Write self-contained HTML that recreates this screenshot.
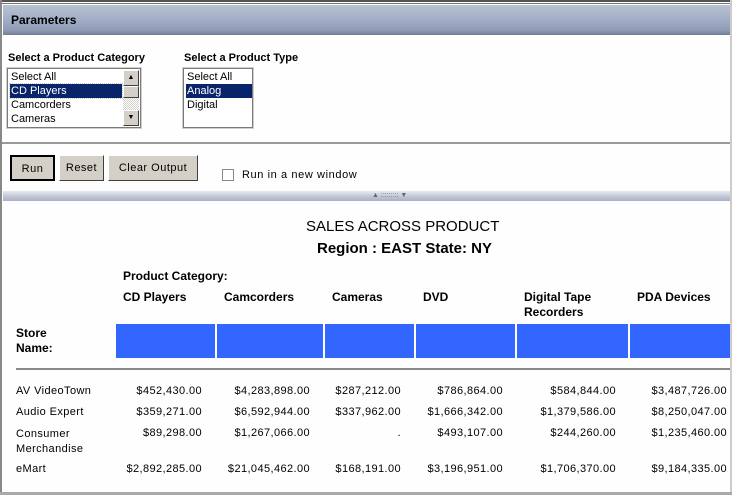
<!DOCTYPE html>
<html><head><meta charset="utf-8"><style>
*{margin:0;padding:0;box-sizing:border-box}
body{width:732px;height:495px;background:#fdfefd;position:relative;overflow:hidden;font-family:"Liberation Sans",sans-serif;font-size:12px;color:#000}
.a{position:absolute;white-space:nowrap}
.b{font-weight:bold}
.hdr{left:3px;top:5px;width:727px;height:30px;background:linear-gradient(#b9c2d3,#a6b2c9 40%,#8f9bb5 85%,#6f7a93)}
.lb{background:#fff;border:1px solid #7a7a7a;box-shadow:0 0 0 1px #d0d0d0;overflow:hidden}
.it{position:absolute;left:2px;height:14px;line-height:14px;font-size:11px;padding-left:1px}
.sel{background:#0a246a;color:#fff}
.btn{position:absolute;top:155px;height:26px;background:#d4d0c8;border:1px solid;border-color:#fff #404040 #404040 #fff;font-size:11px;text-align:center;line-height:24px;letter-spacing:.5px}
.blue{position:absolute;top:324px;height:34px;background:#3366ff}
.r{position:absolute;text-align:right;font-size:11px;letter-spacing:.4px}
.l{position:absolute;font-size:11px;letter-spacing:.4px}
</style></head><body>
<div class="a" style="left:0;top:0;width:732px;height:2px;background:#555"></div>
<div class="a" style="left:0;top:3px;width:732px;height:1px;background:#777"></div>
<div class="a" style="left:0;top:0;width:2px;height:495px;background:#888"></div>
<div class="a" style="left:730px;top:0;width:2px;height:495px;background:#ccc"></div>
<div class="a hdr"></div>
<div class="a b" style="left:11px;top:13px;font-size:12px">Parameters</div>

<div class="a b" style="left:8px;top:52px;font-size:11px">Select a Product Category</div>
<div class="a b" style="left:184px;top:52px;font-size:11px">Select a Product Type</div>

<div class="a lb" style="left:7px;top:68px;width:134px;height:60px">
 <div class="it" style="top:1px;width:112px">Select All</div>
 <div class="it sel" style="top:15px;width:112px;outline:1px dotted #ccc">CD Players</div>
 <div class="it" style="top:29px;width:112px">Camcorders</div>
 <div class="it" style="top:43px;width:112px">Cameras</div>
 <div style="position:absolute;left:115px;top:1px;width:16px;height:56px;background:repeating-conic-gradient(#d4d0c8 0 25%,#fff 0 50%) 0 0/2px 2px"></div>
 <div style="position:absolute;left:115px;top:1px;width:16px;height:16px;background:#d4d0c8;border:1px solid;border-color:#fff #404040 #404040 #fff;font-size:7px;text-align:center;line-height:14px">▲</div>
 <div style="position:absolute;left:115px;top:17px;width:16px;height:12px;background:#d4d0c8;border:1px solid;border-color:#fff #404040 #404040 #fff"></div>
 <div style="position:absolute;left:115px;top:41px;width:16px;height:16px;background:#d4d0c8;border:1px solid;border-color:#fff #404040 #404040 #fff;font-size:7px;text-align:center;line-height:14px">▼</div>
</div>
<div class="a lb" style="left:183px;top:68px;width:70px;height:60px">
 <div class="it" style="top:1px;width:66px">Select All</div>
 <div class="it sel" style="top:15px;width:66px">Analog</div>
 <div class="it" style="top:29px;width:66px">Digital</div>
</div>

<div class="a" style="left:2px;top:142px;width:728px;height:2px;background:#999"></div>

<div class="btn" style="left:10px;width:45px;border:2px solid #000;">Run</div>
<div class="btn" style="left:59px;width:45px">Reset</div>
<div class="btn" style="left:108px;width:90px">Clear Output</div>
<div class="a" style="left:222px;top:169px;width:12px;height:12px;border:1px solid #888;background:#fff"></div>
<div class="a" style="left:242px;top:169px;font-size:11px;letter-spacing:.6px">Run in a new window</div>

<div class="a" style="left:3px;top:191px;width:727px;height:10px;background:linear-gradient(#e6e9f0,#c4cad8 50%,#a9b1c6)"></div>
<div class="a" style="left:372px;top:191px;font-size:7px;color:#667;line-height:9px">▲ ::::::::: ▼</div>

<div class="a" style="left:306px;top:218px;font-size:15px">SALES ACROSS PRODUCT</div>
<div class="a b" style="left:317px;top:240px;font-size:15px">Region : EAST State: NY</div>

<div class="a b" style="left:123px;top:269px">Product Category:</div>
<div class="a b" style="left:123px;top:290px">CD Players</div>
<div class="a b" style="left:224px;top:290px">Camcorders</div>
<div class="a b" style="left:332px;top:290px">Cameras</div>
<div class="a b" style="left:423px;top:290px">DVD</div>
<div class="a b" style="left:524px;top:290px;line-height:15px">Digital Tape<br>Recorders</div>
<div class="a b" style="left:637px;top:290px">PDA Devices</div>
<div class="a b" style="left:16px;top:326px;line-height:15px">Store<br>Name:</div>

<div class="blue" style="left:116px;width:99px"></div>
<div class="blue" style="left:217px;width:106px"></div>
<div class="blue" style="left:325px;width:89px"></div>
<div class="blue" style="left:416px;width:99px"></div>
<div class="blue" style="left:517px;width:111px"></div>
<div class="blue" style="left:630px;width:100px"></div>
<div class="a" style="left:16px;top:368px;width:714px;height:2px;background:#888"></div>

<div class="l" style="left:16px;top:385px">AV VideoTown</div>
<div class="l" style="left:16px;top:406px">Audio Expert</div>
<div class="l" style="left:16px;top:427px;line-height:15px">Consumer<br>Merchandise</div>
<div class="l" style="left:16px;top:463px">eMart</div>

<div class="r" style="right:530px;top:385px">$452,430.00</div>
<div class="r" style="right:422px;top:385px">$4,283,898.00</div>
<div class="r" style="right:331px;top:385px">$287,212.00</div>
<div class="r" style="right:229px;top:385px">$786,864.00</div>
<div class="r" style="right:116px;top:385px">$584,844.00</div>
<div class="r" style="right:5px;top:385px">$3,487,726.00</div>

<div class="r" style="right:530px;top:406px">$359,271.00</div>
<div class="r" style="right:422px;top:406px">$6,592,944.00</div>
<div class="r" style="right:331px;top:406px">$337,962.00</div>
<div class="r" style="right:229px;top:406px">$1,666,342.00</div>
<div class="r" style="right:116px;top:406px">$1,379,586.00</div>
<div class="r" style="right:5px;top:406px">$8,250,047.00</div>

<div class="r" style="right:530px;top:427px">$89,298.00</div>
<div class="r" style="right:422px;top:427px">$1,267,066.00</div>
<div class="r" style="right:331px;top:427px">.</div>
<div class="r" style="right:229px;top:427px">$493,107.00</div>
<div class="r" style="right:116px;top:427px">$244,260.00</div>
<div class="r" style="right:5px;top:427px">$1,235,460.00</div>

<div class="r" style="right:530px;top:463px">$2,892,285.00</div>
<div class="r" style="right:422px;top:463px">$21,045,462.00</div>
<div class="r" style="right:331px;top:463px">$168,191.00</div>
<div class="r" style="right:229px;top:463px">$3,196,951.00</div>
<div class="r" style="right:116px;top:463px">$1,706,370.00</div>
<div class="r" style="right:5px;top:463px">$9,184,335.00</div>

<div class="a" style="left:0;top:492px;width:732px;height:3px;background:#aaa"></div>
</body></html>
